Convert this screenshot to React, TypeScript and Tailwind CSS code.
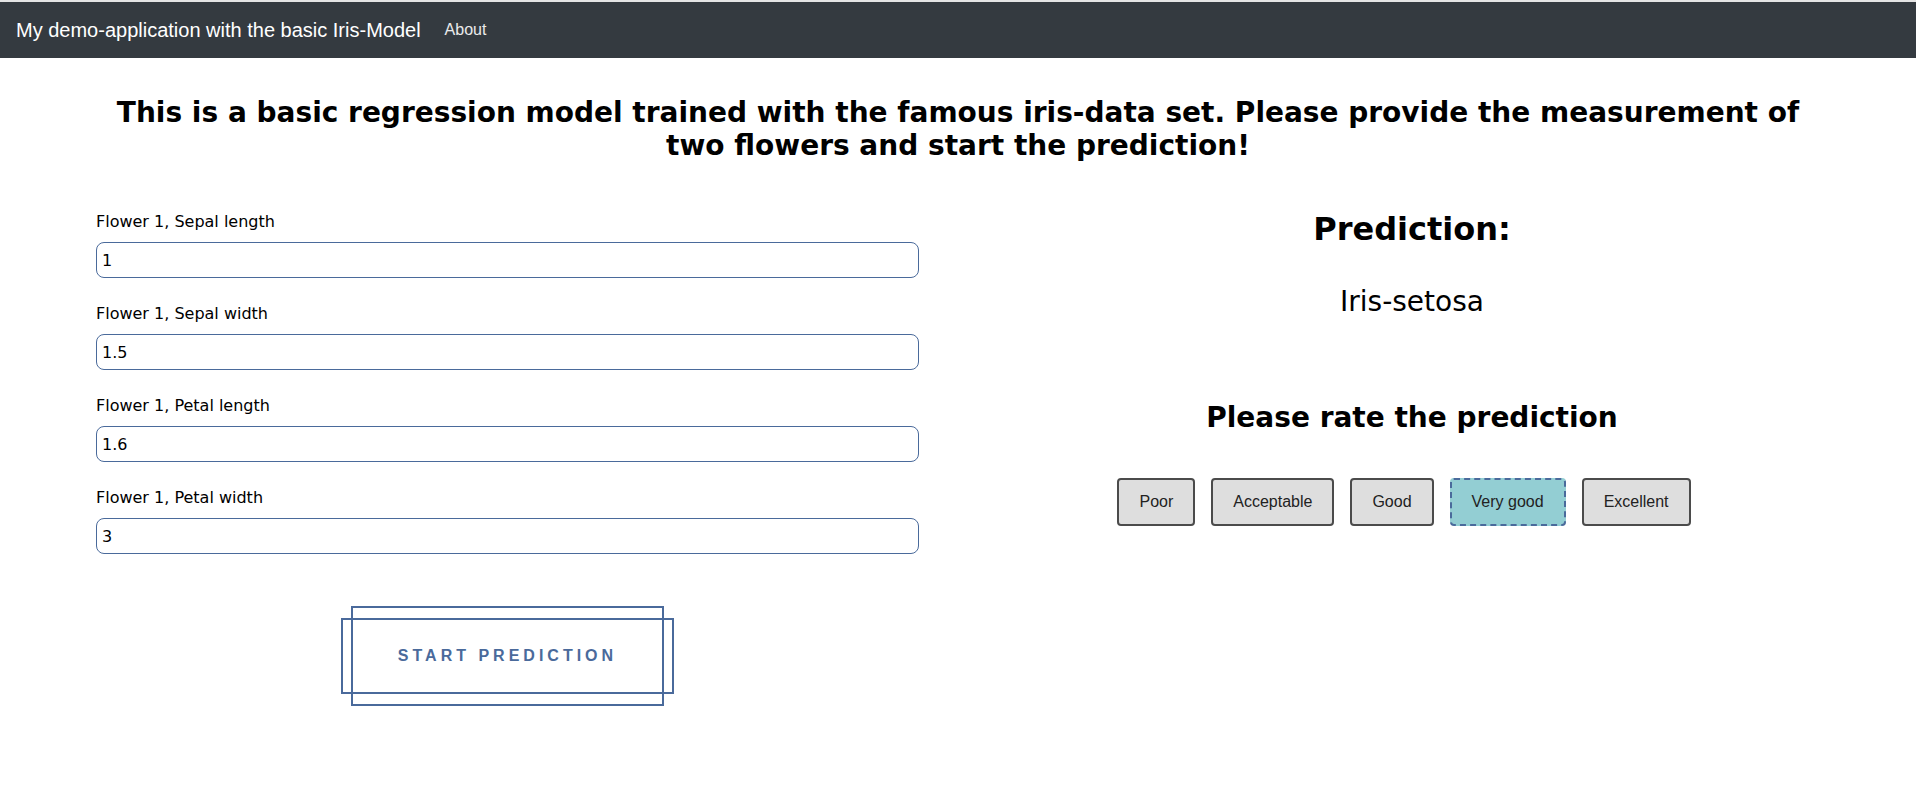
import { useState } from 'react';

const fields = [
  { label: 'Flower 1, Sepal length', value: '1' },
  { label: 'Flower 1, Sepal width', value: '1.5' },
  { label: 'Flower 1, Petal length', value: '1.6' },
  { label: 'Flower 1, Petal width', value: '3' },
];

const ratings = ['Poor', 'Acceptable', 'Good', 'Very good', 'Excellent'];

const Navbar = () => (
  <nav className="flex h-[56px] items-center bg-[#343a40] px-4 font-['Liberation_Sans',Arial,sans-serif] text-white">
    <span className="mr-[24px] text-[20px] leading-[30px]">My demo-application with the basic Iris-Model</span>
    <a href="#" className="text-[16px] leading-6 text-white/90">
      About
    </a>
  </nav>
);

const FlowerForm = () => {
  const [values, setValues] = useState(fields.map((f) => f.value));

  return (
    <div className="w-[823px]">
      {fields.map((field, i) => (
        <div key={field.label} className="mb-[24px]">
          <label className="mb-2 block text-[16px] leading-6 text-black">{field.label}</label>
          <input
            value={values[i]}
            onChange={(e) => setValues(values.map((v, j) => (j === i ? e.target.value : v)))}
            className="block h-[36px] w-full rounded-lg border border-[#4a6a9b] px-[5px] text-[16px] text-black outline-none"
          />
        </div>
      ))}

      <div className="mt-[52px] flex justify-center">
        <button className="relative h-[100px] w-[313px] border-2 border-[#4a6a9b] bg-transparent">
          <span
            className="absolute inset-x-[-12px] inset-y-[10px] border-2 border-[#4a6a9b]"
            aria-hidden
          />
          <span className="relative font-['Liberation_Sans',Arial,sans-serif] text-[16px] font-bold tracking-[4px] text-[#4a6a9b]">
            START PREDICTION
          </span>
        </button>
      </div>
    </div>
  );
};

const PredictionPanel = () => (
  <div className="flex w-[908px] flex-col items-center text-black">
    <h2 className="text-[32px] leading-[38px] font-bold">Prediction:</h2>
    <p className="mt-[37px] text-[28px] leading-[34px]">Iris-setosa</p>
    <h3 className="mt-[82px] text-[28px] leading-[34px] font-bold">Please rate the prediction</h3>
    <div className="mt-[43px] flex justify-center">
      {ratings.map((r) => (
        <button
          key={r}
          className={
            r === 'Very good'
              ? "mr-[16px] h-[48px] rounded-[4px] border-2 border-dashed border-[#4a6a9b] bg-[#93ced3] px-5 font-['Liberation_Sans',Arial,sans-serif] text-[16px] text-[#222]"
              : "mr-[16px] h-[48px] rounded-[4px] border-2 border-[#4b4b4b] bg-[#dedede] px-5 font-['Liberation_Sans',Arial,sans-serif] text-[16px] text-[#222]"
          }
        >
          {r}
        </button>
      ))}
    </div>
  </div>
);

export default function App() {
  return (
    <div className="min-h-[792px] border-t-2 border-[#e4e4e4] bg-white font-['DejaVu_Sans',sans-serif]">
      <Navbar />
      <h1 className="mx-auto mt-[38px] max-w-[1720px] text-center text-[28px] leading-[33px] font-bold text-black">
        This is a basic regression model trained with the famous iris-data set. Please provide the measurement of two flowers and start the prediction!
      </h1>
      <div className="mt-[48px] flex pl-[96px]">
        <FlowerForm />
        <div className="ml-[39px]">
          <PredictionPanel />
        </div>
      </div>
    </div>
  );
}
